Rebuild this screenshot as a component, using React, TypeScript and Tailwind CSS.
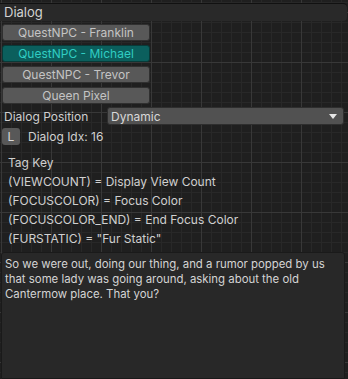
import React from "react";

const npcs = ["QuestNPC - Franklin", "QuestNPC - Michael", "QuestNPC - Trevor", "Queen Pixel"];

const tags = [
  "Tag Key",
  "(VIEWCOUNT) = Display View Count",
  "(FOCUSCOLOR) = Focus Color",
  "(FOCUSCOLOR_END) = End Focus Color",
  '(FURSTATIC) = "Fur Static"',
];

const App: React.FC = () => {
  const selected = 1;

  return (
    <div
      className="w-[348px] h-[379px] overflow-hidden flex flex-col text-[12px] leading-[15px] text-[#c8c8c8] bg-[#1f1f1f] font-['Inter','Noto_Sans',sans-serif] bg-[linear-gradient(to_right,#383838_1px,transparent_1px),linear-gradient(to_bottom,#383838_1px,transparent_1px),linear-gradient(to_right,#282828_1px,transparent_1px),linear-gradient(to_bottom,#282828_1px,transparent_1px)] bg-[size:50px_50px,50px_50px,10px_10px,10px_10px] bg-[position:1px_12px,1px_12px,1px_2px,1px_2px]"
    >
      {/* header */}
      <div className="mt-[3px] h-[18px] w-[347px] bg-[#292929] border-t border-[#111] rounded-tr-[4px] rounded-br-[4px] pl-[4px] flex items-center text-[13px] text-[#d2d2d2]">
        Dialog
      </div>

      {/* npc list */}
      <div className="mt-[3px] ml-[2px] flex flex-col gap-[4px] w-[148px]">
        {npcs.map((n, i) => (
          <div
            key={n}
            className={
              i === selected
                ? "h-[17px] rounded-[3px] bg-[#0b5f5d] border border-[#083a38] text-[#30cdc3] flex items-center justify-center"
                : "h-[17px] rounded-[3px] bg-[#585858] border border-[#303030] text-[#c4c4c4] flex items-center justify-center"
            }
          >
            {n}
          </div>
        ))}
      </div>

      {/* dialog position */}
      <div className="mt-[3px] h-[18px] flex items-center">
        <span className="pl-[4px] w-[107px] text-[#d0d0d0]">Dialog Position</span>
        <div className="w-[237px] h-[18px] rounded-[3px] bg-[#515151] border border-[#2e2e2e] flex items-center justify-between pl-[3px] pr-[6px] text-[#d8d8d8]">
          <span>Dynamic</span>
          <svg width="8" height="5" viewBox="0 0 8 5">
            <path d="M0 0 H8 L4 5 Z" fill="#e6e6e6" />
          </svg>
        </div>
      </div>

      {/* idx row */}
      <div className="mt-[3px] flex items-center gap-[8px] pl-[2px]">
        <div className="w-[18px] h-[17px] rounded-[3px] bg-[#585858] flex items-center justify-center text-[#d8d8d8]">
          L
        </div>
        <span className="text-[#d0d0d0]">Dialog Idx: 16</span>
      </div>

      {/* tag key */}
      <div className="mt-[10px] pl-[8px] flex flex-col gap-[4px] text-[#d0d0d0]">
        {tags.map((t) => (
          <div key={t}>{t}</div>
        ))}
      </div>

      {/* text area */}
      <div className="mt-[6px] ml-[1px] w-[344px] flex-1 bg-[#282828] border border-[#1a1a1a] rounded-tl-[3px] rounded-tr-[3px] px-[3px] pt-[4px] text-[11.4px] text-[#d4d4d4]">
        So we were out, doing our thing, and a rumor popped by us that some lady was going around, asking about the old Cantermow place. That you?
      </div>
    </div>
  );
};

export default App;
